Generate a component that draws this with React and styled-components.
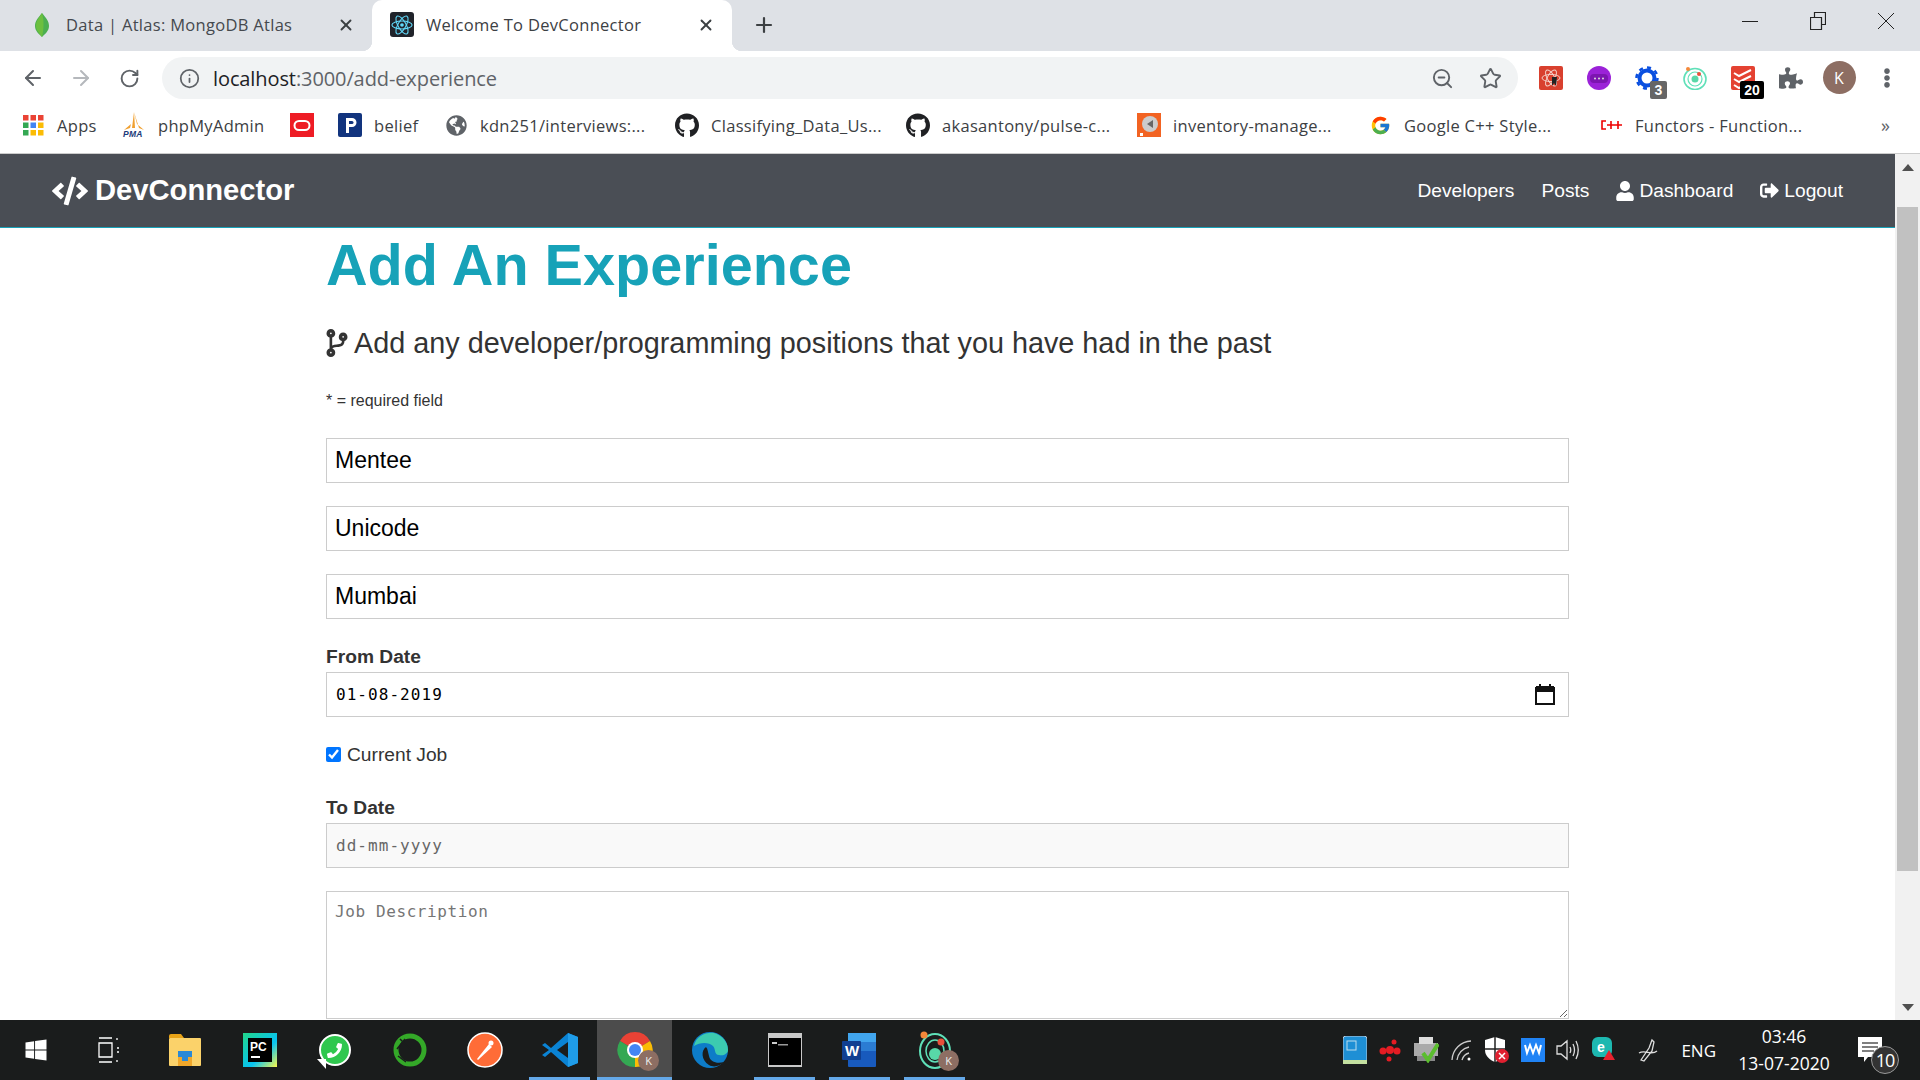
import React from "react";
import styled, { createGlobalStyle } from "styled-components";
import { ArrowLeft, ArrowRight, RotateCw, Info, ZoomOut, Star, X, Plus } from "lucide-react";
import { FaCodeBranch, FaUser, FaSignOutAlt, FaCode, FaGithub, FaGlobeAmericas, FaPhoneAlt, FaWindows, FaPuzzlePiece, FaEllipsisV } from "react-icons/fa";
import { FcGoogle } from "react-icons/fc";

const Global = createGlobalStyle`
  html, body { margin: 0; padding: 0; background: #fff; overflow: hidden; }
  * { box-sizing: border-box; }
`;
const uiFont = `"Open Sans", "Noto Sans", sans-serif`;
const pageFont = `"Liberation Sans", Arial, sans-serif`;
const monoFont = `"DejaVu Sans Mono", "Liberation Mono", monospace`;

const Screen = styled.div`width:1920px;height:1080px;display:flex;flex-direction:column;overflow:hidden;font-family:${uiFont};`;

/* ---------- browser chrome ---------- */
const TabStrip = styled.div`height:51px;flex:none;background:#dee1e6;display:flex;align-items:stretch;padding-left:12px;`;
const Tab = styled.div`
  position:relative;width:360px;display:flex;align-items:center;gap:12px;padding:0 17px 2px;
  font-size:16.5px;letter-spacing:.3px;color:${p=>p.$active?"#3c4043":"#45494e"};
  background:${p=>p.$active?"#fff":"transparent"};border-radius:10px 10px 0 0;
  &::before,&::after{content:"";display:${p=>p.$active?"block":"none"};position:absolute;bottom:0;width:10px;height:10px;}
  &::before{left:-10px;background:radial-gradient(circle at 0 0,#dee1e6 10px,#fff 10.5px);}
  &::after{right:-10px;background:radial-gradient(circle at 100% 0,#dee1e6 10px,#fff 10.5px);}
`;
const TabIcon = styled.span`width:25px;height:25px;flex:none;display:flex;align-items:center;justify-content:center;`;
const TabClose = styled.span`margin-left:auto;display:flex;color:#3c4043;`;
const NewTab = styled.span`margin:0 0 2px 20px;align-self:center;display:flex;color:#3c4043;`;
const WindowControls = styled.div`margin-left:auto;display:flex;height:42px;align-items:center;`;
const WinButton = styled.span`width:68px;display:flex;justify-content:center;color:#222;`;

const Toolbar = styled.div`height:53px;flex:none;background:#fff;display:flex;align-items:center;padding:0 9px 0 9px;`;
const NavIcon = styled.span`width:48px;height:42px;padding-top:1px;display:flex;align-items:center;justify-content:center;color:${p=>p.$off?"#b5b8bc":"#5f6368"};`;
const AddressBar = styled.div`width:1356px;height:42px;margin:0 9px 0 9px;background:#f1f3f4;border-radius:21px;display:flex;align-items:center;padding:2px 4px 0 17px;font-size:20px;letter-spacing:-.1px;color:#5f6368;`;
const Host = styled.span`color:#202124;`;
const AddrIcon = styled.span`display:flex;color:#5f6368;margin-right:13px;`;
const AddrEnd = styled.div`margin-left:auto;display:flex;`;
const AddrBtn = styled.span`width:48px;display:flex;justify-content:center;color:#5f6368;`;
const ExtIcon = styled.span`position:relative;width:48px;height:42px;display:flex;align-items:center;justify-content:center;color:#5f6368;`;
const ExtBadge = styled.span`position:absolute;left:${p=>p.$left}px;top:24px;height:18px;width:${p=>p.$w}px;background:${p=>p.$bg};color:#fff;border-radius:2px;font:bold 14px/18px ${pageFont};text-align:center;`;
const Avatar = styled.span`width:33px;height:33px;border-radius:50%;background:#8d6e63;color:#fff;font-size:16px;display:flex;align-items:center;justify-content:center;`;

const Bookmarks = styled.div`height:50px;flex:none;background:#fff;border-bottom:1px solid #ccc;display:flex;align-items:center;padding:0 0 7px 21px;`;
const Bookmark = styled.div`width:${p=>p.$w}px;flex:none;display:flex;align-items:center;gap:12px;font-size:16.5px;letter-spacing:.3px;color:#3c4043;white-space:nowrap;`;
const BookIcon = styled.span`width:24px;height:24px;flex:none;display:flex;align-items:center;justify-content:center;color:#202124;`;
const Chevron = styled.span`margin-left:auto;margin-right:30px;font-size:18px;color:#5f6368;`;

/* ---------- page ---------- */
const PageRow = styled.div`flex:1;min-height:0;display:flex;`;
const Viewport = styled.div`flex:1;min-width:0;display:flex;flex-direction:column;font-family:${pageFont};color:#333;`;
const Navbar = styled.nav`height:74px;flex:none;background:#4a4e55;border-bottom:1px solid #17a2b8;display:flex;align-items:center;padding:0 52px 0 52px;color:#fff;`;
const Logo = styled.div`display:flex;align-items:center;gap:7px;font-size:29.2px;font-weight:bold;`;
const NavLinks = styled.div`margin-left:auto;display:flex;gap:27px;font-size:19.2px;`;
const NavLink = styled.span`display:flex;align-items:center;gap:5px;`;
const UserIcon = styled(FaUser)`width:18px;height:20px;flex:none;`;
const Content = styled.main`flex:1;min-height:0;overflow:hidden;padding:0 326px;`;
const Title = styled.h1`margin:0;padding-top:3px;font-size:57.6px;line-height:69px;font-weight:bold;color:#17a2b8;`;
const Lead = styled.p`margin:0;padding-top:26px;font-size:28.8px;line-height:34px;display:flex;align-items:center;gap:6px;`;
const BranchIcon = styled(FaCodeBranch)`width:22px;height:28px;flex:none;`;
const Small = styled.small`display:block;margin-top:31px;font-size:16px;line-height:19px;`;
const Form = styled.form`margin-top:28px;display:flex;flex-direction:column;`;
const baseField = `width:100%;height:45px;border:1px solid #ccc;outline:none;border-radius:0;background:#fff;`;
const TextInput = styled.input`${baseField}display:block;padding:0 8px;margin-bottom:23px;font:23px ${pageFont};color:#000;`;
const FieldLabel = styled.div`font-size:19.2px;font-weight:bold;line-height:24px;margin-top:${p=>p.$mt}px;margin-bottom:3px;`;
const DateField = styled.div`${baseField}display:flex;align-items:center;padding:0 13px 0 9px;font:16px ${monoFont};letter-spacing:1.05px;color:${p=>p.$off?"#666":"#000"};background:${p=>p.$off?"#f9f9f9":"#fff"};`;
const CheckRow = styled.label`display:flex;align-items:center;gap:6px;margin-top:26px;font-size:19.2px;line-height:24px;`;
const Check = styled.input`margin:-2px 0 0;width:15px;height:15px;accent-color:#0075ff;`;
const CalIcon = styled.svg`margin-left:auto;`;
const TextArea = styled.textarea`display:block;width:100%;height:128px;margin-top:23px;border:1px solid #ccc;outline:none;border-radius:0;padding:10px 8px;font:16px ${monoFont};letter-spacing:.6px;resize:vertical;&::placeholder{color:#757575;}`;

const ScrollBar = styled.div`width:25px;flex:none;background:#f1f1f1;display:flex;flex-direction:column;align-items:center;`;
const ScrollArrow = styled.div`height:26px;flex:none;display:flex;align-items:center;justify-content:center;color:#505050;font-size:0;margin-top:${p=>p.$end?"auto":"0"};`;
const Thumb = styled.div`width:21px;height:664px;margin-top:27px;background:#c1c1c1;`;

/* ---------- taskbar ---------- */
const Taskbar = styled.footer`height:60px;flex:none;background:#1a1c1c;display:flex;align-items:stretch;color:#fff;`;
const TaskCell = styled.div`position:relative;width:${p=>p.$w||75}px;flex:none;display:flex;align-items:center;justify-content:center;background:${p=>p.$active?"#4c4c4c":"transparent"};
  &::after{content:"";display:${p=>p.$open?"block":"none"};position:absolute;bottom:0;left:${p=>p.$active?0:7}px;right:${p=>p.$active?0:7}px;height:3px;background:#64a8e8;}`;
const Overlay = styled.span`position:absolute;left:41px;top:30px;width:21px;height:21px;border-radius:50%;background:#8d6e63;color:#eee;font-size:11px;display:flex;align-items:center;justify-content:center;`;
const Tray = styled.div`margin-left:auto;display:flex;align-items:center;padding-right:22px;`;
const TrayIcon = styled.span`width:35.6px;display:flex;justify-content:center;margin-left:${p=>p.$gap||0}px;`;
const Lang = styled.span`font-size:17px;margin:0 18px 0 16px;`;
const Clock = styled.div`width:100px;text-align:center;font-size:17.5px;line-height:27px;margin-right:24px;`;
const Notif = styled.span`position:relative;display:flex;width:40px;`;
const NotifCount = styled.span`position:absolute;left:13px;top:9px;width:28px;height:28px;border-radius:50%;background:#333;border:1px solid #999;font-size:18px;display:flex;align-items:center;justify-content:center;letter-spacing:-1px;`;

/* ---------- logos ---------- */
const Leaf = () => <svg width="14" height="24" viewBox="0 0 14 24"><path d="M7 0C3 5 0 8 0 13c0 5 4 8 6.500 10.500L7 24l.5-.5C10 21 14 18 14 13 14 8 11 5 7 0z" fill="#4caf50"/><path d="M7 0c2 6 2 16 0 24C4 20 1 17 1 13 1 8 4 5 7 0z" fill="#6cbf3f"/></svg>;
const Atom = ({c="#61dafb",size=22,sw=1.200}) => <svg width={size} height={size} viewBox="0 0 24 24" fill="none" stroke={c} strokeWidth={sw}><ellipse cx="12" cy="12" rx="11" ry="4.300"/><ellipse cx="12" cy="12" rx="11" ry="4.300" transform="rotate(60 12 12)"/><ellipse cx="12" cy="12" rx="11" ry="4.300" transform="rotate(120 12 12)"/><circle cx="12" cy="12" r="2" fill={c} stroke="none"/></svg>;
const ReactFav = styled.span`width:24px;height:25px;background:#20232a;border-radius:3px;display:flex;align-items:center;justify-content:center;`;
const Grid9 = () => <svg width="21" height="21" viewBox="0 0 21 21">{[["#ea4335","#ea4335","#ea4335"],["#34a853","#4285f4","#fbbc05"],["#34a853","#fbbc05","#fbbc05"]].map((r,i)=>r.map((c,j)=><rect key={i+"-"+j} x={j*7.500} y={i*7.500} width="5.500" height="5.500" fill={c}/>))}</svg>;
const Pma = () => <svg width="24" height="26" viewBox="0 0 24 26"><path d="M12 0l-3 12-7 6 6-2zM12 0l1 16h-3zM12 0l3 12 7 6-5-2z" fill="#f0a030"/><text x="1" y="25" fontSize="8.500" fontWeight="bold" fontStyle="italic" fill="#1a3a7a" fontFamily="Liberation Sans">PMA</text></svg>;
const Oracle = () => <svg width="24" height="24"><rect width="24" height="24" fill="#ee1c25"/><rect x="4.500" y="8" width="15" height="9" rx="4.500" fill="none" stroke="#fff" strokeWidth="2"/></svg>;
const PIcon = () => <svg width="24" height="24"><rect width="24" height="24" rx="2" fill="#12347e"/><path d="M8 5h6a4.500 4.500 0 010 9h-3v6H8z" fill="#fff"/><path d="M11 8v3h3a1.500 1.500 0 000-3z" fill="#12347e"/></svg>;
const Inventory = () => <svg width="24" height="24"><rect width="24" height="24" fill="#f26322"/><circle cx="13" cy="11" r="8" fill="#ccc"/><path d="M10 11l6-4v8z" fill="#666"/><rect x="3" y="20" width="3" height="3" fill="#fff"/></svg>;
const Cpp = () => <svg width="24" height="14" viewBox="0 0 24 14" fill="none" stroke="#e00" strokeWidth="1.600"><path d="M7 3H3v8h4M8 7h15M12 3v8M19 3v8"/></svg>;
const ExtReact = () => <svg width="24" height="24" viewBox="0 0 24 24"><rect width="24" height="24" rx="2" fill="#d9402e"/><g transform="translate(2 2)"><ellipse cx="10" cy="10" rx="9" ry="3.600" fill="none" stroke="#f3d0c8"/><ellipse cx="10" cy="10" rx="9" ry="3.600" fill="none" stroke="#f3d0c8" transform="rotate(60 10 10)"/><ellipse cx="10" cy="10" rx="9" ry="3.600" fill="none" stroke="#f3d0c8" transform="rotate(120 10 10)"/><path d="M11 9l5 0-1 9-2-3-2 3z" fill="#222"/></g></svg>;
const ExtPurple = () => <svg width="24" height="24" viewBox="0 0 24 24"><circle cx="12" cy="12" r="12" fill="#9b22d8"/><rect x="3" y="8" width="18" height="9" rx="4" fill="#7c15b0"/><circle cx="8" cy="12.500" r="1" fill="#ddd"/><circle cx="12" cy="12.500" r="1" fill="#ddd"/><circle cx="16" cy="12.500" r="1" fill="#ddd"/></svg>;
const ExtGear = () => <svg width="25" height="24" viewBox="0 0 25 24" fill="none"><circle cx="12" cy="12" r="7.500" stroke="#0a4fe0" strokeWidth="4"/><circle cx="12" cy="12" r="10.500" stroke="#0a4fe0" strokeWidth="2.500" strokeDasharray="4 4.200"/></svg>;
const ExtOrbit = () => <svg width="24" height="24" viewBox="0 0 24 24" fill="none"><ellipse cx="12" cy="13" rx="11" ry="10.500" stroke="#5fe0b8" strokeWidth="1.600"/><ellipse cx="12" cy="13" rx="7" ry="7" stroke="#5fe0b8" strokeWidth="1.200"/><circle cx="12" cy="13" r="3.500" fill="#58d8a8"/><circle cx="5" cy="3" r="2" fill="#f5883a"/><circle cx="16" cy="8" r="2" fill="#e8503a"/></svg>;
const ExtTodo = () => <svg width="24" height="24" viewBox="0 0 24 24" fill="none"><rect width="24" height="24" rx="2" fill="#e44232"/><path d="M3 7l5 3 12-6M3 13l5 3 12-6M3 19l5 3 12-6" stroke="#fff" strokeWidth="2"/></svg>;
const Explorer = () => <svg width="32" height="34" viewBox="0 0 32 34"><path d="M0 3a2 2 0 012-2h10l3 4H0z" fill="#e8a317"/><rect y="5" width="32" height="28" rx="1" fill="#fbd26a"/><rect x="9" y="22" width="14" height="11" fill="#f0a72a"/><path d="M9 18h14v6h-4v4h-6v-4H9z" fill="#2a89d6"/></svg>;
const PyCharm = () => <svg width="34" height="34" viewBox="0 0 34 34"><defs><linearGradient id="pc" x1="0" y1="0" x2="1" y2="1"><stop offset="0" stopColor="#21d789"/><stop offset=".6" stopColor="#07c3f2"/><stop offset="1" stopColor="#fcf84a"/></linearGradient></defs><rect width="34" height="34" fill="url(#pc)"/><rect x="5" y="5" width="24" height="24" fill="#000"/><text x="7" y="18" fontSize="12" fontWeight="bold" fontFamily="Liberation Sans" fill="#fff">PC</text><rect x="8" y="23" width="9" height="2" fill="#fff"/></svg>;
const WaBubble = styled.span`position:relative;width:32px;height:32px;border-radius:50%;background:#2fc74e;border:2px solid #fff;display:flex;align-items:center;justify-content:center;color:#fff;
  &::after{content:"";position:absolute;left:-4px;bottom:-5px;border-style:solid;border-width:10px 0 0 9px;border-color:transparent transparent transparent #fff;transform:rotate(180deg);}
  svg{transform:scaleX(-1);}`;
const Ring = () => <svg width="36" height="36" fill="none"><circle cx="18" cy="18" r="14" stroke="#34a828" strokeWidth="5"/><path d="M8 7l10 10M5 17l8-10M6 24l8 6" stroke="#1a1c1c" strokeWidth="1.500"/></svg>;
const Postman = () => <svg width="36" height="36"><circle cx="18" cy="18" r="17" fill="#ff6c37" stroke="#fff" strokeWidth="1.500"/><path d="M10 27l12-15 3 3-14 13z" fill="#fff"/><circle cx="24" cy="11" r="2.500" fill="#fff"/></svg>;
const VsCode = () => <svg width="36" height="36" viewBox="0 0 36 36"><path d="M26 1l10 4v26l-10 4L9 20l-6 5-3-2 7-5-7-5 3-2 6 5z" fill="#0a83d4"/><path d="M26 1l10 4v26l-10 4z" fill="#1f9ce8"/><path d="M26 10L15 18l11 8z" fill="#1a1c1c"/></svg>;
const Chrome = ({size=36}) => <svg width={size} height={size} viewBox="0 0 36 36"><path d="M18 18L3 9A17 17 0 0133 9z" fill="#e94235"/><path d="M18 18L33 9A17 17 0 0118 35z" fill="#fbbc05"/><path d="M18 18L18 35A17 17 0 013 9z" fill="#34a853"/><circle cx="18" cy="18" r="8" fill="#fff"/><circle cx="18" cy="18" r="6" fill="#4285f4"/></svg>;
const Edge = () => <svg width="36" height="36" viewBox="0 0 36 36"><circle cx="18" cy="18" r="18" fill="#0d7cc8"/><path d="M2 14C4 4 14 0 22 1c8 2 14 9 14 17 0 4-5 6-9 5-5 0-3-6-6-9-4-4-13-4-19 0z" fill="#3ccbb0"/><path d="M14 15c-5 3-5 13 3 18 5 3 11 1 15-3-7 2-14 0-15-6-1-3-1-7-3-9z" fill="#1a1c1c"/></svg>;
const Cmd = () => <svg width="34" height="34" viewBox="0 0 34 34"><rect width="34" height="34" fill="#c8c8c8"/><rect x="1" y="5" width="32" height="27" fill="#000"/><rect x="4" y="9" width="5" height="2" fill="#ccc"/><rect x="10" y="11" width="10" height="1.500" fill="#999"/></svg>;
const Word = () => <svg width="36" height="36" viewBox="0 0 36 36"><rect x="6" y="1" width="28" height="34" rx="1" fill="#185abd"/><rect x="6" y="1" width="28" height="9" fill="#41a5ee"/><rect x="6" y="10" width="28" height="9" fill="#2b7cd3"/><rect x="0" y="9" width="19" height="19" rx="1" fill="#103f91"/><text x="3" y="24" fontSize="15" fontWeight="bold" fill="#fff" fontFamily="Liberation Sans">W</text></svg>;
const OrbitTask = () => <svg width="36" height="40" viewBox="0 0 36 40" fill="none"><ellipse cx="18" cy="21" rx="15" ry="17" stroke="#5fe0b8" strokeWidth="2"/><ellipse cx="18" cy="21" rx="9" ry="11" stroke="#5fe0b8" strokeWidth="1.500"/><circle cx="18" cy="24" r="6" fill="#58d8a8"/><circle cx="7" cy="5" r="3.500" fill="#f5883a"/><circle cx="24" cy="12" r="3.500" fill="#e8503a"/></svg>;
const TaskView = () => <svg width="24" height="28" viewBox="0 0 24 28" fill="none" stroke="#fff" strokeWidth="1.300"><path d="M2 2h13M2 26h13M2 7h13v14H2zM20 4v-2M20 26v-2M20 12h2M20 16h2"/></svg>;
const Intel = () => <svg width="24" height="28"><rect width="24" height="28" rx="3" fill="#1e8fd5" stroke="#bcd" /><rect x="4" y="5" width="9" height="9" fill="none" stroke="#bde"/><path d="M0 24h24v4H0z" fill="#c3e0a0"/></svg>;
const RedDots = () => <svg width="22" height="24"><g fill="#e51c23"><circle cx="11" cy="12" r="4"/><circle cx="4" cy="13" r="3.500"/><circle cx="18" cy="13" r="3.500"/><circle cx="15" cy="4" r="2.500"/><circle cx="10" cy="21" r="2.500"/></g></svg>;
const Printer = () => <svg width="25" height="26"><rect y="6" width="24" height="13" fill="#aaa"/><rect x="5" y="0" width="14" height="7" fill="#ddd"/><rect x="3" y="19" width="18" height="5" fill="#888"/><path d="M9 16l5 7 10-16" stroke="#5bbd2e" strokeWidth="4" fill="none"/></svg>;
const Wifi = () => <svg width="22" height="24" fill="none" stroke="#ccc" strokeWidth="1.300"><path d="M1 22A20 20 0 0120 3M6 22A15 15 0 0118 9M11 22A10 10 0 0118 15"/><circle cx="18" cy="21" r="1.500" fill="#fff" stroke="none"/></svg>;
const Shield = () => <svg width="24" height="28" viewBox="0 0 24 28"><path d="M10 1l10 3v10c0 6-5 10-10 12C5 24 0 20 0 14V4z" fill="#fff"/><path d="M10 1v25M0 13h20" stroke="#222" strokeWidth="1.500"/><circle cx="17" cy="20" r="7" fill="#e02030"/><path d="M14 17l6 6m0-6l-6 6" stroke="#fff" strokeWidth="1.500"/></svg>;
const Waves = () => <svg width="24" height="24"><rect width="24" height="24" fill="#2083f5"/><path d="M4 7l2 8 3-8 3 8 3-8 3 8 2-8" stroke="#fff" strokeWidth="2" fill="none"/></svg>;
const Volume = () => <svg width="24" height="24" fill="none" stroke="#ddd" strokeWidth="1.300"><path d="M1 8h4l6-5v18l-6-5H1zM14 9c1 2 1 4 0 6M17 6c2 4 2 8 0 12M20 3c3 6 3 12 0 18"/></svg>;
const Eset = () => <svg width="24" height="26"><rect x="0" y="0" width="20" height="20" rx="6" fill="#1db8b0"/><text x="5" y="15" fontSize="14" fontWeight="bold" fill="#fff" fontFamily="Liberation Sans">e</text><path d="M17 13l6 10H11z" fill="#e8222e"/></svg>;
const Pen = () => <svg width="24" height="24" fill="none" stroke="#ddd" strokeWidth="1.300"><path d="M5 22l8-12 3-8 2 2-2 9-8 10zM3 15c6-4 12 3 18-2"/></svg>;
const NotifIcon = () => <svg width="24" height="26" viewBox="0 0 24 26"><path d="M0 0h24v20H10l-4 5v-5H0z" fill="#fff"/><path d="M4 6h16M4 10h16M4 14h12" stroke="#555" strokeWidth="1.300"/></svg>;

const books = [
  { w:101, t:"Apps", i:<Grid9/> },
  { w:168, t:"phpMyAdmin", i:<Pma/> },
  { w:48, i:<Oracle/> },
  { w:106, t:"belief", i:<PIcon/> },
  { w:231, t:"kdn251/interviews:...", i:<FaGlobeAmericas size={21} color="#5f6368"/> },
  { w:231, t:"Classifying_Data_Us...", i:<FaGithub size={25}/> },
  { w:231, t:"akasantony/pulse-c...", i:<FaGithub size={25}/> },
  { w:231, t:"inventory-manage...", i:<Inventory/> },
  { w:231, t:"Google C++ Style...", i:<FcGoogle size={21}/> },
  { w:250, t:"Functors - Function...", i:<Cpp/> },
];
const tasks = [
  { i:<FaWindows size={24} color="#fff"/> , w:71},
  { i:<TaskView/> , w:76},
  { i:<Explorer/> },
  { i:<PyCharm/> },
  { i:<WaBubble><FaPhoneAlt size={15}/></WaBubble> },
  { i:<Ring/> },
  { i:<Postman/> },
  { i:<VsCode/>, open:true },
  { i:<Chrome/>, open:true, active:true, k:true },
  { i:<Edge/> },
  { i:<Cmd/>, open:true },
  { i:<Word/>, open:true },
  { i:<OrbitTask/>, open:true, k:true },
];
const trays = [<Intel/>,<RedDots/>,<Printer/>,<Wifi/>,<Shield/>,<Waves/>,<Volume/>,<Eset/>];

export default function App() {
  return (
    <Screen>
      <Global/>
      <TabStrip>
        <Tab><TabIcon><Leaf/></TabIcon>Data | Atlas: MongoDB Atlas<TabClose><X size={18} strokeWidth={2.500}/></TabClose></Tab>
        <Tab $active><TabIcon><ReactFav><Atom/></ReactFav></TabIcon>Welcome To DevConnector<TabClose><X size={18} strokeWidth={2.500}/></TabClose></Tab>
        <NewTab><Plus size={24} strokeWidth={2.200}/></NewTab>
        <WindowControls>
          <WinButton><svg width="16" height="16" fill="none" stroke="#222"><path d="M0 8.500h16"/></svg></WinButton>
          <WinButton><svg width="16" height="18" fill="none" stroke="#222" strokeWidth="1.200"><path d="M.5 5.500h11v12H.5zM4.500 5.500v-5h11v12h-4"/></svg></WinButton>
          <WinButton><svg width="18" height="18" fill="none" stroke="#222"><path d="M1 1l16 16M17 1L1 17"/></svg></WinButton>
        </WindowControls>
      </TabStrip>
      <Toolbar>
        <NavIcon><ArrowLeft size={24}/></NavIcon>
        <NavIcon $off><ArrowRight size={24}/></NavIcon>
        <NavIcon><RotateCw size={21} strokeWidth={2.200}/></NavIcon>
        <AddressBar>
          <AddrIcon><Info size={21}/></AddrIcon>
          <Host>localhost</Host>:3000/add-experience
          <AddrEnd>
            <AddrBtn><ZoomOut size={23}/></AddrBtn>
            <AddrBtn><Star size={23}/></AddrBtn>
          </AddrEnd>
        </AddressBar>
        <ExtIcon><ExtReact/></ExtIcon>
        <ExtIcon><ExtPurple/></ExtIcon>
        <ExtIcon><ExtGear/><ExtBadge $left={27} $w={17} $bg="#666">3</ExtBadge></ExtIcon>
        <ExtIcon><ExtOrbit/></ExtIcon>
        <ExtIcon><ExtTodo/><ExtBadge $left={21} $w={24} $bg="#000">20</ExtBadge></ExtIcon>
        <ExtIcon><FaPuzzlePiece size={24}/></ExtIcon>
        <ExtIcon><Avatar>K</Avatar></ExtIcon>
        <ExtIcon><FaEllipsisV size={20}/></ExtIcon>
      </Toolbar>
      <Bookmarks>
        {books.map((b,i)=><Bookmark key={i} $w={b.w}><BookIcon>{b.i}</BookIcon>{b.t}</Bookmark>)}
        <Chevron>»</Chevron>
      </Bookmarks>
      <PageRow>
        <Viewport>
          <Navbar>
            <Logo><FaCode size={36}/>DevConnector</Logo>
            <NavLinks>
              <NavLink>Developers</NavLink>
              <NavLink>Posts</NavLink>
              <NavLink><UserIcon/>Dashboard</NavLink>
              <NavLink><FaSignOutAlt size={19}/>Logout</NavLink>
            </NavLinks>
          </Navbar>
          <Content>
            <Title>Add An Experience</Title>
            <Lead><BranchIcon/>Add any developer/programming positions that you have had in the past</Lead>
            <Small>* = required field</Small>
            <Form>
              <TextInput defaultValue="Mentee"/>
              <TextInput defaultValue="Unicode"/>
              <TextInput defaultValue="Mumbai"/>
              <FieldLabel $mt={3}>From Date</FieldLabel>
              <DateField>01-08-2019
                <CalIcon width="20" height="21" viewBox="0 0 20 21" fill="none"><path d="M1 4h18v16H1z" stroke="#111" strokeWidth="2"/><rect x="1" y="2" width="18" height="6" fill="#111"/><rect x="4" y="0" width="2" height="3" fill="#111"/><rect x="14" y="0" width="2" height="3" fill="#111"/></CalIcon>
              </DateField>
              <CheckRow><Check type="checkbox" defaultChecked/>Current Job</CheckRow>
              <FieldLabel $mt={29}>To Date</FieldLabel>
              <DateField $off>dd-mm-yyyy</DateField>
              <TextArea placeholder="Job Description"/>
            </Form>
          </Content>
        </Viewport>
        <ScrollBar>
          <ScrollArrow><svg width="12" height="7"><path d="M6 0l6 7H0z" fill="#505050"/></svg></ScrollArrow>
          <Thumb/>
          <ScrollArrow $end><svg width="12" height="7"><path d="M6 7L0 0h12z" fill="#505050"/></svg></ScrollArrow>
        </ScrollBar>
      </PageRow>
      <Taskbar>
        {tasks.map((t,i)=><TaskCell key={i} $w={t.w} $open={t.open} $active={t.active}>{t.i}{t.k&&<Overlay>K</Overlay>}</TaskCell>)}
        <Tray>
          {trays.map((t,i)=><TrayIcon key={i}>{t}</TrayIcon>)}
          <TrayIcon $gap={8}><Pen/></TrayIcon>
          <Lang>ENG</Lang>
          <Clock>03:46<br/>13-07-2020</Clock>
          <Notif><NotifIcon/><NotifCount>10</NotifCount></Notif>
        </Tray>
      </Taskbar>
    </Screen>
  );
}
